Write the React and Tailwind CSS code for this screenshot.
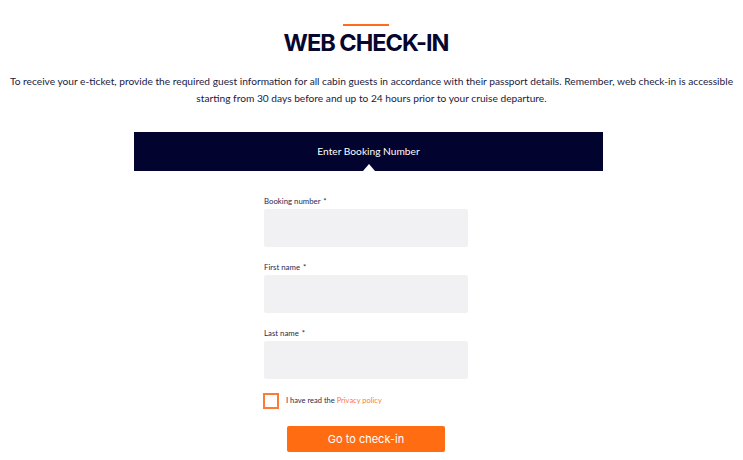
export default function App() {
  return (
    <div className="w-[743px] h-[460px] bg-white overflow-hidden font-['Inter',sans-serif] text-[#0b0b35]">
      <div className="flex flex-col items-center pt-[24px]">
        <div className="w-[46px] h-[2px] bg-[#ff6c1a] mr-[11px]" />
        <h1 className="mt-[5px] mr-[11px] text-[23.5px] leading-[24px] font-bold tracking-[-1px] text-[#06062e]">WEB CHECK-IN</h1>
        <p className="mt-[18px] text-center text-[10.2px] leading-[17px] text-[#1a1a40] whitespace-nowrap font-['Lato',sans-serif]">
          To receive your e-ticket, provide the required guest information for all cabin guests in accordance with their passport details. Remember, web check-in is accessible
          <br />
          starting from 30 days before and up to 24 hours prior to your cruise departure.
        </p>
      </div>

      <div className="relative ml-[134px] mt-[25px] w-[469px] h-[39px] bg-[#02032e] flex items-center justify-center">
        <span className="font-['Lato',sans-serif] text-[10.2px] text-white">Enter Booking Number</span>
        <div className="absolute left-[229px] bottom-0 w-0 h-0 border-l-[6px] border-r-[6px] border-b-[7px] border-l-transparent border-r-transparent border-b-white" />
      </div>

      <form className="w-[204px] ml-[264px] mt-[25px] font-['Lato',sans-serif]">
        {['Booking number', 'First name', 'Last name'].map((label) => (
          <div key={label} className="mb-[15px]">
            <label className="block text-[7.8px] leading-[10px] text-[#2a2a50]">
              {label} <span className="ml-[1px]">*</span>
            </label>
            <div className="mt-[3px] h-[38px] rounded-[2px] bg-[#f1f1f3]" />
          </div>
        ))}

        <div className="flex items-center mt-[-1px] -ml-[1px]">
          <div className="w-[16px] h-[16px] border-2 border-[#ff7a33]" />
          <span className="ml-[7px] text-[7.5px] text-[#2a2a50]">
            I have read the <span className="text-[#ff7a33]">Privacy policy</span>
          </span>
        </div>
      </form>

      <div className="mt-[16px] ml-[287px]">
        <button className="w-[158px] h-[26px] rounded-[2px] bg-[#ff6c12] text-white text-[11px] font-['Inter',sans-serif]">
          Go to check-in
        </button>
      </div>
    </div>
  );
}
